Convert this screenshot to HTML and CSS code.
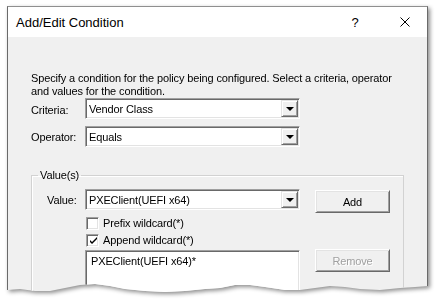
FILE: index.html
```html
<!DOCTYPE html>
<html>
<head>
<meta charset="utf-8">
<link rel="stylesheet" href="styles.css">
</head>
<body>
<div class="frame">
  <div class="dialog">
    <div class="titlebar">
      <span class="title">Add/Edit Condition</span>
      <span class="help">?</span>
      <svg class="close" width="10" height="10" viewBox="0 0 10 10"><path d="M0.5 0.5 L9.5 9.5 M9.5 0.5 L0.5 9.5" stroke="#000" stroke-width="1" fill="none"/></svg>
    </div>
    <div class="content">
      <p class="intro">Specify a condition for the policy being configured. Select a criteria, operator<br>and values for the condition.</p>
      <div class="field-row">
        <span class="label">Criteria:</span>
        <div class="combo"><span class="combo-text">Vendor Class</span><span class="drop"><span class="arrow"></span></span></div>
      </div>
      <div class="field-row">
        <span class="label op">Operator:</span>
        <div class="combo"><span class="combo-text">Equals</span><span class="drop"><span class="arrow"></span></span></div>
      </div>
      <fieldset class="group">
        <legend>Value(s)</legend>
        <div class="group-grid">
          <span class="label vlabel">Value:</span>
          <div class="combo"><span class="combo-text">PXEClient(UEFI x64)</span><span class="drop"><span class="arrow"></span></span></div>
          <button class="btn add">Add</button>

          <label class="check row2"><span class="box"></span><span>Prefix wildcard(*)</span></label>
          <label class="check row3"><span class="box checked"><svg width="9" height="9" viewBox="0 0 9 9"><path d="M1 3 L1 5 L3 7 L8 2 L8 0 L3 5 Z" fill="#000"/></svg></span><span>Append wildcard(*)</span></label>

          <div class="listbox">PXEClient(UEFI x64)*</div>
          <button class="btn remove" disabled>Remove</button>
        </div>
      </fieldset>
    </div>
  </div>
</div>
</body>
</html>
```

FILE: styles.css
```css
html, body {
  margin: 0;
  background: #fff;
}
body {
  padding: 6px 0 0 7px;
  font-family: "Liberation Sans", Arial, sans-serif;
  font-size: 11px;
  letter-spacing: -0.13px;
  color: #000;
  overflow: hidden;
  height: 303px;
  box-sizing: border-box;
}
.frame {
  width: 421px;
  filter: drop-shadow(2px 2px 2px rgba(0,0,0,0.45));
}
.dialog {
  width: 421px;
  height: 292px;
  box-sizing: border-box;
  border-left: 1px solid #6a6a6a;
  border-right: 1px solid #6a6a6a;
  border-top: 1px solid #8f8f8f;
  background: #f0f0f0;
  display: flex;
  flex-direction: column;
  overflow: hidden;
  clip-path: polygon(0 0, 421px 0, 421px 280px, 408px 281px, 393px 282px, 373px 284px, 353px 283px, 338px 281px, 323px 280px, 308px 282px, 293px 284px, 278px 284px, 258px 281px, 243px 279px, 228px 279px, 213px 282px, 198px 283px, 178px 285px, 158px 286px, 138px 285px, 118px 283px, 103px 280px, 88px 278px, 73px 279px, 58px 282px, 43px 285px, 28px 285px, 13px 283px, 0 284px);
}
.titlebar {
  flex-shrink: 0;
  height: 30px;
  background: #fff;
  display: flex;
  align-items: center;
  padding-left: 8px;
  padding-right: 17px;
}
.title {
  flex: 1;
  font-size: 13px;
  letter-spacing: 0;
}
.help {
  width: 10px;
  text-align: center;
  font-size: 13px;
  margin-right: 40px;
}
.close {
  display: block;
}
.content {
  flex-shrink: 0;
  padding: 35px 0 0 23px;
}
.intro {
  margin: 0;
  line-height: 13px;
}
.field-row {
  display: flex;
  align-items: flex-start;
  margin-bottom: 7px;
}
.field-row .label {
  width: 54px;
  padding-top: 6px;
  line-height: 13px;
}
.field-row .label.op {
  padding-top: 5px;
}
.combo {
  width: 215px;
  height: 21px;
  box-sizing: border-box;
  background: #fff;
  border-top: 1px solid #a0a0a0;
  border-left: 1px solid #a0a0a0;
  border-bottom: 1px solid #fff;
  border-right: 1px solid #fff;
  box-shadow: inset 1px 1px 0 #696969, inset -1px -1px 0 #e3e3e3;
  display: flex;
  align-items: stretch;
  padding: 1px;
}
.combo-text {
  flex: 1;
  padding-left: 2px;
  line-height: 17px;
  padding-top: 1px;
}
.drop {
  width: 17px;
  box-sizing: border-box;
  background: #f0f0f0;
  border-top: 1px solid #e3e3e3;
  border-left: 1px solid #e3e3e3;
  border-bottom: 1px solid #696969;
  border-right: 1px solid #696969;
  box-shadow: inset 1px 1px 0 #fff, inset -1px -1px 0 #a0a0a0;
  display: flex;
  align-items: center;
  justify-content: center;
}
.arrow {
  width: 0;
  height: 0;
  border-left: 4px solid transparent;
  border-right: 4px solid transparent;
  border-top: 4px solid #000;
  margin-top: 1px;
}
.group {
  margin: 22px 0 0 0;
  padding: 0;
  width: 373px;
  height: 160px;
  box-sizing: border-box;
  border: 1px solid #d2d2d2;
  box-shadow: inset 1px 1px 0 #fff;
}
.group legend {
  margin-left: 6px;
  padding: 0 2px;
  line-height: 13px;
  font-size: 11px;
}
.group-grid {
  display: grid;
  grid-template-columns: 38px 215px 15px 75px;
  padding: 7px 0 0 15px;
  align-items: start;
}
.vlabel {
  line-height: 13px;
  padding-top: 5px;
}
.btn {
  grid-column: 4;
  font-family: "Liberation Sans", Arial, sans-serif;
  font-size: 11px;
  letter-spacing: -0.13px;
  color: #000;
  width: 75px;
  height: 23px;
  padding: 0;
  background: #f0f0f0;
  border-top: 1px solid #fff;
  border-left: 1px solid #fff;
  border-bottom: 1px solid #696969;
  border-right: 1px solid #696969;
  box-shadow: inset 1px 1px 0 #e3e3e3, inset -1px -1px 0 #a0a0a0;
}
.add {
  margin-top: 1px;
}
.remove {
  color: #a0a0a0;
  text-shadow: 1px 1px 0 #fff;
  margin-top: 2px;
}
.check {
  grid-column: 2;
  display: flex;
  align-items: center;
  gap: 4px;
  line-height: 13px;
  margin-left: 1px;
}
.row2 { margin-top: 4px; }
.row3 { margin-top: 4px; }
.box {
  width: 13px;
  height: 13px;
  box-sizing: border-box;
  background: #fff;
  border-top: 1px solid #a0a0a0;
  border-left: 1px solid #a0a0a0;
  border-bottom: 1px solid #fff;
  border-right: 1px solid #fff;
  box-shadow: inset 1px 1px 0 #696969, inset -1px -1px 0 #e3e3e3;
  display: flex;
  align-items: center;
  justify-content: center;
}
.box svg {
  display: block;
  margin: 1px 0 0 1px;
}
.listbox {
  grid-column: 2;
  margin-top: 3px;
  height: 80px;
  box-sizing: border-box;
  background: #fff;
  border-top: 1px solid #a0a0a0;
  border-left: 1px solid #a0a0a0;
  border-bottom: 1px solid #fff;
  border-right: 1px solid #fff;
  box-shadow: inset 1px 1px 0 #696969, inset -1px -1px 0 #e3e3e3;
  padding: 4px 0 0 5px;
  line-height: 13px;
}
```
